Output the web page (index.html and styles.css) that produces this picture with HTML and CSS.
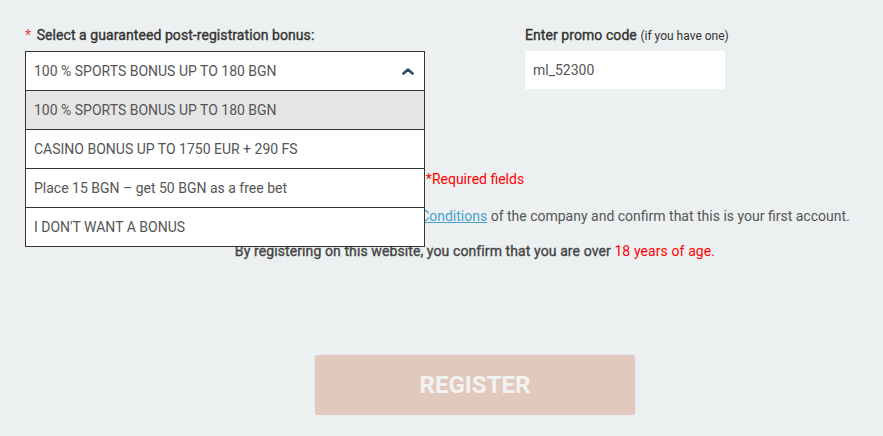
FILE: index.html
```html
<!DOCTYPE html>
<html lang="en">
<head>
<meta charset="utf-8">
<title>Register</title>
<link rel="stylesheet" href="styles.css">
</head>
<body>
<div class="form">
  <div class="row">
    <div class="field bonus">
      <div class="label"><span class="star">*</span> Select a guaranteed post-registration bonus:</div>
      <div class="select">
        <div class="select-head">
          <span>100 % SPORTS BONUS UP TO 180 BGN</span>
          <svg class="chev" width="12" height="8" viewBox="0 0 12 8"><polyline points="1.5,6.5 6,2.5 10.5,6.5" fill="none" stroke="#34495e" stroke-width="2.6" stroke-linecap="round" stroke-linejoin="round"/></svg>
        </div>
        <div class="select-list">
          <div class="opt active">100 % SPORTS BONUS UP TO 180 BGN</div>
          <div class="opt">CASINO BONUS UP TO 1750 EUR + 290 FS</div>
          <div class="opt">Place 15 BGN – get 50 BGN as a free bet</div>
          <div class="opt">I DON'T WANT A BONUS</div>
        </div>
      </div>
    </div>
    <div class="field promo">
      <div class="label">Enter promo code <small>(if you have one)</small></div>
      <div class="input">ml_52300</div>
    </div>
  </div>
  <div class="info">
    <p class="required">*Required fields</p>
    <p class="terms">By clicking on “Register”, I accept all the <a href="#">Terms and Conditions</a> of the company and confirm that this is your first account.</p>
    <p class="age">By registering on this website, you confirm that you are over <span class="red">18 years of age.</span></p>
    <div class="btn-wrap"><button class="register" type="button">REGISTER</button></div>
  </div>
</div>
</body>
</html>
```
FILE: styles.css
```css
html, body {
  margin: 0;
  padding: 0;
}
body {
  background: #ecf0f1;
  font-family: Roboto, "Liberation Sans", sans-serif;
  font-size: 14px;
  color: #555;
}
.form {
  padding: 25px 0 0 25px;
}
.row {
  display: flex;
  gap: 100px;
  position: relative;
  z-index: 2;
}
.label {
  font-weight: 400;
  -webkit-text-stroke: 0.35px #333;
  letter-spacing: 0.07px;
  color: #333;
  line-height: 20px;
  height: 20px;
  margin-bottom: 6px;
  white-space: nowrap;
}
.label small {
  font-size: 12px;
  font-weight: 400;
  -webkit-text-stroke: 0;
  letter-spacing: 0;
}
.star {
  color: #f03e3e;
  -webkit-text-stroke: 0;
  margin-right: 2px;
}
.bonus {
  width: 400px;
}
.select {
  position: relative;
  width: 400px;
}
.select-head {
  box-sizing: border-box;
  height: 40px;
  border: 1px solid #333;
  background: #fff;
  display: flex;
  align-items: center;
  justify-content: space-between;
  padding: 0 10px 0 8px;
  color: #555;
}
.chev {
  display: block;
  margin-top: -1px;
}
.select-list {
  position: absolute;
  top: 39px;
  left: 0;
  right: 0;
  border: 1px solid #333;
  background: #fff;
}
.opt {
  height: 38px;
  line-height: 38px;
  padding-left: 8px;
  color: #555;
  white-space: nowrap;
}
.opt + .opt {
  border-top: 1px solid #333;
}
.opt.active {
  background: #e5e5e5;
}
.promo {
  width: 200px;
}
.input {
  box-sizing: border-box;
  width: 200px;
  height: 38px;
  line-height: 38px;
  background: #fff;
  padding-left: 8px;
  color: #555;
}
.info {
  margin-left: 42px;
  text-align: center;
  position: relative;
  z-index: 1;
}
.info p {
  margin: 0;
  line-height: 20px;
  white-space: nowrap;
}
.required {
  color: #ff0000;
  margin-top: 78px !important;
}
.terms {
  margin-top: 17px !important;
  color: #555;
}
.terms a {
  color: #4a9fd0;
  text-decoration: underline;
}
.age {
  margin-top: 15px !important;
  -webkit-text-stroke: 0.35px #444;
  letter-spacing: 0.1px;
  color: #444;
}
.red {
  color: #ff0000;
  -webkit-text-stroke: 0;
}
.btn-wrap {
  margin-top: 94px;
  display: flex;
  justify-content: center;
}
.register {
  width: 320px;
  height: 60px;
  border: none;
  border-radius: 3px;
  background: #e2c9bd;
  color: #f2f2f2;
  font-family: Roboto, "Liberation Sans", sans-serif;
  font-size: 24px;
  font-weight: 700;
  box-shadow: 0 0 2px rgba(0,0,0,0.08);
  padding: 0;
}
```
